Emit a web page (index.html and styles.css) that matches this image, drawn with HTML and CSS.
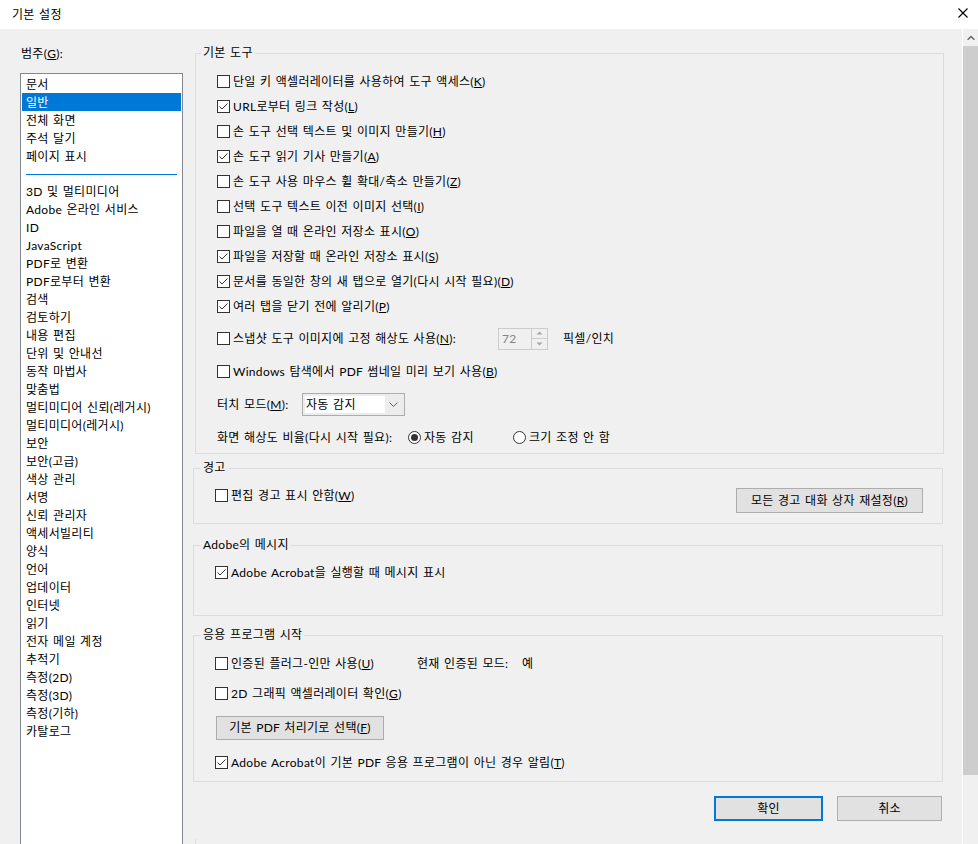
FILE: index.html
```html
<!DOCTYPE html>
<html lang="ko">
<head>
<meta charset="utf-8">
<title>기본 설정</title>
<link rel="stylesheet" href="styles.css">
</head>
<body>
<div class="window">
  <div class="titlebar">
    <span class="title">기본 설정</span>
    <svg class="close" width="10" height="10" viewBox="0 0 10 10"><path d="M0.5 0.5 L9.5 9.5 M9.5 0.5 L0.5 9.5" stroke="#000" stroke-width="1.1" fill="none"/></svg>
  </div>
  <div class="main">
    <div class="sidebar">
      <div class="cat-label">범주(<u>G</u>):</div>
      <div class="listbox">
        <div class="item">문서</div>
        <div class="item selected">일반</div>
        <div class="item">전체 화면</div>
        <div class="item">주석 달기</div>
        <div class="item">페이지 표시</div>
        <div class="sep"></div>
        <div class="item">3D 및 멀티미디어</div>
        <div class="item">Adobe 온라인 서비스</div>
        <div class="item">ID</div>
        <div class="item">JavaScript</div>
        <div class="item">PDF로 변환</div>
        <div class="item">PDF로부터 변환</div>
        <div class="item">검색</div>
        <div class="item">검토하기</div>
        <div class="item">내용 편집</div>
        <div class="item">단위 및 안내선</div>
        <div class="item">동작 마법사</div>
        <div class="item">맞춤법</div>
        <div class="item">멀티미디어 신뢰(레거시)</div>
        <div class="item">멀티미디어(레거시)</div>
        <div class="item">보안</div>
        <div class="item">보안(고급)</div>
        <div class="item">색상 관리</div>
        <div class="item">서명</div>
        <div class="item">신뢰 관리자</div>
        <div class="item">액세서빌리티</div>
        <div class="item">양식</div>
        <div class="item">언어</div>
        <div class="item">업데이터</div>
        <div class="item">인터넷</div>
        <div class="item">읽기</div>
        <div class="item">전자 메일 계정</div>
        <div class="item">추적기</div>
        <div class="item">측정(2D)</div>
        <div class="item">측정(3D)</div>
        <div class="item">측정(기하)</div>
        <div class="item">카탈로그</div>
      </div>
    </div>

    <div class="content">
      <fieldset class="group g1">
        <legend>기본 도구</legend>
        <div class="gbody b1">
          <div class="row"><span class="cb"></span><span class="lbl">단일 키 액셀러레이터를 사용하여 도구 액세스(<u>K</u>)</span></div>
          <div class="row"><span class="cb"><svg width="11" height="11" viewBox="0 0 11 11"><path d="M1.5 5.5 L4 8 L9.5 2.5" stroke="#333" stroke-width="1" fill="none"/></svg></span><span class="lbl">URL로부터 링크 작성(<u>L</u>)</span></div>
          <div class="row"><span class="cb"></span><span class="lbl">손 도구 선택 텍스트 및 이미지 만들기(<u>H</u>)</span></div>
          <div class="row"><span class="cb"><svg width="11" height="11" viewBox="0 0 11 11"><path d="M1.5 5.5 L4 8 L9.5 2.5" stroke="#333" stroke-width="1" fill="none"/></svg></span><span class="lbl">손 도구 읽기 기사 만들기(<u>A</u>)</span></div>
          <div class="row"><span class="cb"></span><span class="lbl">손 도구 사용 마우스 휠 확대/축소 만들기(<u>Z</u>)</span></div>
          <div class="row"><span class="cb"></span><span class="lbl">선택 도구 텍스트 이전 이미지 선택(<u>I</u>)</span></div>
          <div class="row"><span class="cb"></span><span class="lbl">파일을 열 때 온라인 저장소 표시(<u>O</u>)</span></div>
          <div class="row"><span class="cb"><svg width="11" height="11" viewBox="0 0 11 11"><path d="M1.5 5.5 L4 8 L9.5 2.5" stroke="#333" stroke-width="1" fill="none"/></svg></span><span class="lbl">파일을 저장할 때 온라인 저장소 표시(<u>S</u>)</span></div>
          <div class="row"><span class="cb"><svg width="11" height="11" viewBox="0 0 11 11"><path d="M1.5 5.5 L4 8 L9.5 2.5" stroke="#333" stroke-width="1" fill="none"/></svg></span><span class="lbl">문서를 동일한 창의 새 탭으로 열기(다시 시작 필요)(<u>D</u>)</span></div>
          <div class="row"><span class="cb"><svg width="11" height="11" viewBox="0 0 11 11"><path d="M1.5 5.5 L4 8 L9.5 2.5" stroke="#333" stroke-width="1" fill="none"/></svg></span><span class="lbl">여러 탭을 닫기 전에 알리기(<u>P</u>)</span></div>

          <div class="row wide first-wide">
            <span class="cb"></span><span class="lbl snap-lbl">스냅샷 도구 이미지에 고정 해상도 사용(<u>N</u>):</span>
            <span class="spin"><span class="spin-field">72</span><span class="spin-btns"><span class="spin-btn"><svg width="7" height="4" viewBox="0 0 7 4"><path d="M0.5 3.5 L3.5 0.5 L6.5 3.5 Z" fill="#a6a6a6"/></svg></span><span class="spin-btn"><svg width="7" height="4" viewBox="0 0 7 4"><path d="M0.5 0.5 L3.5 3.5 L6.5 0.5 Z" fill="#a6a6a6"/></svg></span></span></span>
            <span class="unit">픽셀/인치</span>
          </div>
          <div class="row wide"><span class="cb"></span><span class="lbl">Windows 탐색에서 PDF 썸네일 미리 보기 사용(<u>B</u>)</span></div>
          <div class="row wide">
            <span class="plain touch-lbl">터치 모드(<u>M</u>):</span>
            <span class="combo"><span class="combo-field">자동 감지</span><span class="combo-arrow"><svg width="9" height="5" viewBox="0 0 9 5"><path d="M0.5 0.5 L4.5 4.5 L8.5 0.5" stroke="#606060" stroke-width="1" fill="none"/></svg></span></span>
          </div>
          <div class="row wide">
            <span class="plain ratio-lbl">화면 해상도 비율(다시 시작 필요):</span>
            <span class="radio checked"></span><span class="lbl radio1-lbl">자동 감지</span>
            <span class="radio"></span><span class="lbl">크기 조정 안 함</span>
          </div>
        </div>
      </fieldset>

      <fieldset class="group g2">
        <legend>경고</legend>
        <div class="gbody b2">
          <div class="row"><span class="cb"></span><span class="lbl">편집 경고 표시 안함(<u>W</u>)</span></div>
          <button class="btn reset-btn">모든 경고 대화 상자 재설정(<u>R</u>)</button>
        </div>
      </fieldset>

      <fieldset class="group g3">
        <legend>Adobe의 메시지</legend>
        <div class="gbody b3">
          <div class="row"><span class="cb"><svg width="11" height="11" viewBox="0 0 11 11"><path d="M1.5 5.5 L4 8 L9.5 2.5" stroke="#333" stroke-width="1" fill="none"/></svg></span><span class="lbl">Adobe Acrobat을 실행할 때 메시지 표시</span></div>
        </div>
      </fieldset>

      <fieldset class="group g4">
        <legend>응용 프로그램 시작</legend>
        <div class="gbody b4">
          <div class="row">
            <span class="cb"></span><span class="lbl cert-lbl">인증된 플러그-인만 사용(<u>U</u>)</span>
            <span class="plain mode-lbl">현재 인증된 모드:</span><span class="plain">예</span>
          </div>
          <div class="row r2"><span class="cb"></span><span class="lbl">2D 그래픽 액셀러레이터 확인(<u>G</u>)</span></div>
          <button class="btn pdf-btn">기본 PDF 처리기로 선택(<u>F</u>)</button>
          <div class="row r4"><span class="cb"><svg width="11" height="11" viewBox="0 0 11 11"><path d="M1.5 5.5 L4 8 L9.5 2.5" stroke="#333" stroke-width="1" fill="none"/></svg></span><span class="lbl">Adobe Acrobat이 기본 PDF 응용 프로그램이 아닌 경우 알림(<u>T</u>)</span></div>
        </div>
      </fieldset>

      <div class="dlg-buttons">
        <button class="btn ok-btn">확인</button>
        <button class="btn cancel-btn">취소</button>
      </div>

      <div class="next-group"></div>
    </div>

    <div class="scrollbar">
      <div class="sb-btn"><svg width="8" height="5" viewBox="0 0 8 5"><path d="M0 4.5 L4 0.5 L8 4.5 L6.6 5 L4 2.4 L1.4 5 Z" fill="#606060"/></svg></div>
      <div class="sb-thumb"></div>
      <div class="sb-track"></div>
      <div class="sb-btn"><svg width="8" height="5" viewBox="0 0 8 5"><path d="M0 0.5 L4 4.5 L8 0.5 L6.6 0 L4 2.6 L1.4 0 Z" fill="#606060"/></svg></div>
    </div>
  </div>
</div>
</body>
</html>
```

FILE: styles.css
```css
* { box-sizing: border-box; }

html, body {
  margin: 0;
  padding: 0;
  background: #f0f0f0;
}

.window {
  width: 978px;
  height: 844px;
  overflow: hidden;
  font-family: Lato, "Noto Sans CJK KR", sans-serif;
  font-size: 12px;
  letter-spacing: 0.3px;
  word-spacing: 1px;
  color: #000;
  background: #f0f0f0;
}

u { text-decoration: underline; text-underline-offset: 1px; }

/* title bar */
.titlebar {
  height: 29px;
  background: #fff;
  display: flex;
  justify-content: space-between;
  align-items: flex-start;
  padding-left: 12px;
}
.title {
  margin-top: 7px;
  line-height: 16px;
}
.close {
  margin-top: 8px;
  margin-right: 10px;
}

/* main area */
.main {
  display: flex;
  height: 815px;
  overflow: hidden;
}

.sidebar {
  width: 183px;
  flex: none;
}
.cat-label {
  padding-left: 21px;
  margin-top: 17px;
  line-height: 16px;
}
.listbox {
  margin-top: 11px;
  margin-left: 20px;
  width: 163px;
  height: 800px;
  background: #fff;
  border: 1px solid #828790;
  padding: 1px;
}
.item {
  height: 18px;
  line-height: 18px;
  padding-left: 4px;
  padding-top: 1px;
  white-space: nowrap;
}
.item.selected {
  background: #0078d7;
  color: #fff;
}
.sep {
  height: 1px;
  background: #0078d7;
  margin: 9px 4px 7px 4px;
}

/* content */
.content {
  flex: 1;
  min-width: 0;
  padding: 16px 19px 0 10px;
  overflow: hidden;
}

.group {
  margin: 0;
  padding: 0;
  border: 1px solid #dcdcdc;
  min-width: 0;
}
.group legend {
  margin-left: 7px;
  padding: 0 2px;
  line-height: 16px;
}
.g1 { margin-left: 2px; margin-right: -1px; }
.g1 legend { margin-left: 5px; }
.g2 { margin-top: 6px; }
.g3 { margin-top: 13px; }
.g4 { margin-top: 11px; }

.gbody { padding-left: 21px; }
.b1 { padding-top: 8px; padding-bottom: 3px; }
.b2 {
  padding-top: 7px;
  padding-bottom: 10px;
  padding-right: 19px;
  display: flex;
  justify-content: space-between;
  align-items: flex-start;
}
.b3 { padding-top: 7px; padding-bottom: 30px; }
.b4 { padding-top: 8px; padding-bottom: 6px; }

.row {
  display: flex;
  align-items: center;
  height: 25px;
  white-space: nowrap;
}
.row.wide { margin-top: 8px; }
.row.first-wide { margin-top: 7px; }
.r2 { margin-top: 5px; }
.r4 { margin-top: 10px; }

.lbl, .plain { line-height: 16px; }
.lbl { margin-left: 3px; }

.cb {
  width: 13px;
  height: 13px;
  flex: none;
  border: 1px solid #333;
  background: #fff;
  display: flex;
}
.cb svg { display: block; }

.radio {
  width: 13px;
  height: 13px;
  flex: none;
  border: 1px solid #333;
  border-radius: 50%;
  background: #fff;
  display: flex;
  align-items: center;
  justify-content: center;
}
.radio.checked::after {
  content: "";
  width: 7px;
  height: 7px;
  border-radius: 50%;
  background: #333;
}

.snap-lbl { width: 265px; }
.spin { display: flex; height: 22px; }
.spin-field {
  width: 34px;
  height: 22px;
  border: 1px solid #cccccc;
  background: #f0f0f0;
  color: #838383;
  padding-left: 3px;
  line-height: 20px;
}
.spin-btns {
  display: flex;
  flex-direction: column;
  width: 16px;
}
.spin-btn {
  height: 11px;
  border: 1px solid #cccccc;
  border-left: none;
  display: flex;
  align-items: center;
  justify-content: center;
  background: #f0f0f0;
}
.spin-btn + .spin-btn { border-top: none; }
.unit { margin-left: 15px; line-height: 16px; }

.touch-lbl { width: 85px; }
.combo {
  display: flex;
  width: 103px;
  height: 23px;
  border: 1px solid #adadad;
  background: #ececec;
  padding: 2px;
}
.combo-field {
  width: 80px;
  background: #fff;
  line-height: 17px;
  padding-left: 1px;
}
.combo-arrow {
  flex: 1;
  display: flex;
  align-items: center;
  justify-content: center;
}

.ratio-lbl { width: 191px; }
.radio1-lbl { width: 89px; }

.cert-lbl { width: 186px; }
.mode-lbl { width: 105px; }

.btn {
  font-family: inherit;
  font-size: 12px;
  letter-spacing: 0.3px;
  word-spacing: 1px;
  color: #000;
  background: #e1e1e1;
  border: 1px solid #adadad;
  padding: 0;
  margin: 0;
  line-height: 16px;
}
.reset-btn {
  width: 187px;
  height: 25px;
  margin-top: 5px;
}
.pdf-btn {
  display: block;
  width: 168px;
  height: 24px;
  margin-top: 10px;
  margin-left: 1px;
}

.dlg-buttons {
  display: flex;
  justify-content: flex-end;
  gap: 14px;
  margin-top: 14px;
  margin-right: 1px;
}
.ok-btn {
  width: 109px;
  height: 25px;
  border: 2px solid #0078d7;
}
.cancel-btn {
  width: 105px;
  height: 25px;
}

.next-group {
  margin-top: 18px;
  margin-left: 2px;
  height: 40px;
  border-left: 1px solid #dcdcdc;
}

/* scrollbar */
.scrollbar {
  width: 16px;
  flex: none;
  border-left: 1px solid #fff;
  background: #f0f0f0;
  display: flex;
  flex-direction: column;
  height: 830px;
}
.sb-btn {
  height: 17px;
  flex: none;
  display: flex;
  align-items: center;
  justify-content: center;
}
.sb-thumb {
  height: 729px;
  flex: none;
  background: #cdcdcd;
}
.sb-track {
  flex: 1;
}
```
